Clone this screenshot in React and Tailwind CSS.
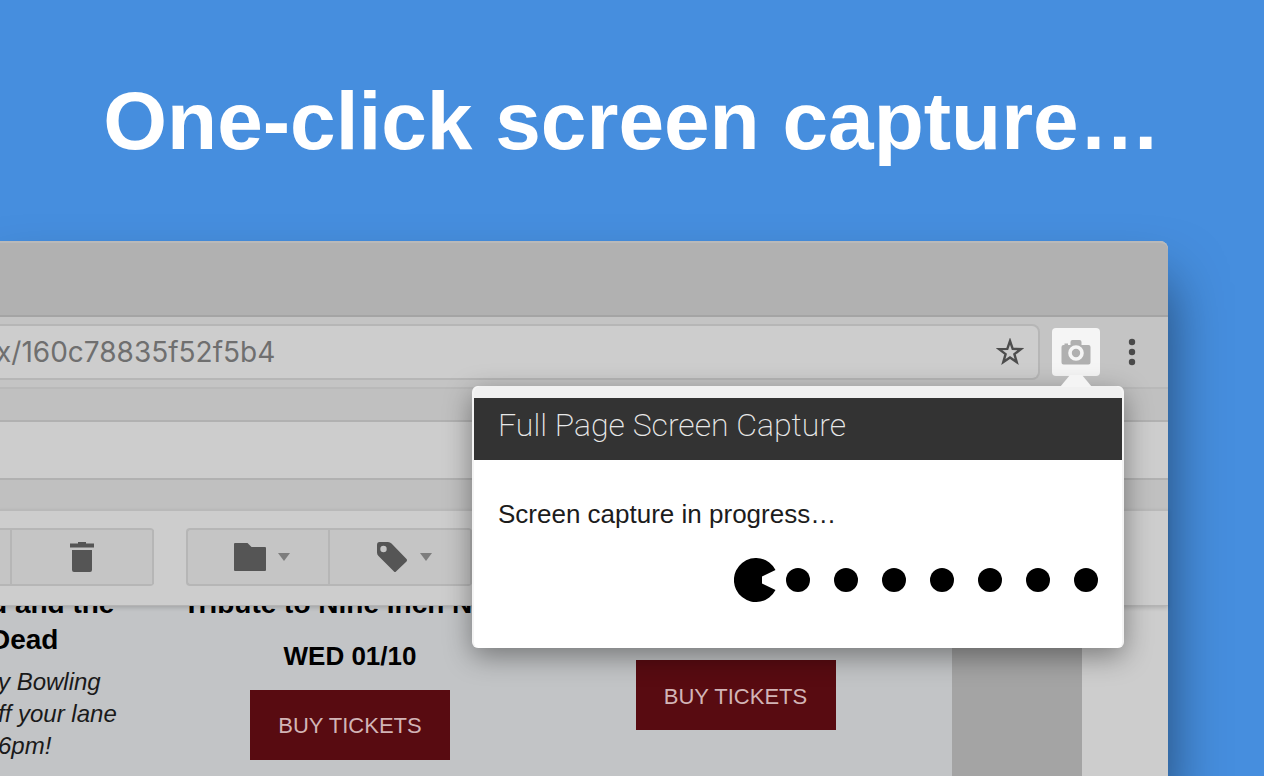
import React, { useState } from "react";

const DOTS = [64, 112, 160, 208, 256, 304, 352];

const StarIcon = () => (
  <svg viewBox="0 0 28 28" className="h-7 w-7" fill="none" stroke="#4d4d4d" strokeWidth="2.4">
    <path d="M14 3l2.7 7.9 8.2.2-6.5 5 2.3 8-6.7-4.7-6.7 4.7 2.3-8-6.5-5 8.2-.2z" />
  </svg>
);

const CameraIcon = () => (
  <svg viewBox="0 0 30 28" className="h-7 w-[30px]">
    <path
      d="M3.500 7V5.500h3.500V7h2.500V4a2 2 0 0 1 2-2h7a2 2 0 0 1 2 2v3H27.500a2 2 0 0 1 2 2v15.500a2 2 0 0 1-2 2h-25a2 2 0 0 1-2-2V9a2 2 0 0 1 2-2z"
      fill="#b0b0b0"
    />
    <circle cx="15" cy="15" r="6" fill="#b0b0b0" stroke="#f5f5f5" strokeWidth="3.6" />
  </svg>
);

const MoreIcon = () => (
  <svg viewBox="0 0 8 28" className="h-7 w-2" fill="#4a4a4a">
    <circle cx="4" cy="4" r="3.200" />
    <circle cx="4" cy="14" r="3.200" />
    <circle cx="4" cy="24" r="3.200" />
  </svg>
);

const TrashIcon = () => (
  <svg viewBox="0 0 24 30" className="h-[30px] w-6" fill="#555555">
    <path d="M8 0h8v1.500h8v4H0v-4h8zM2 8h20v20a2 2 0 0 1-2 2H4a2 2 0 0 1-2-2z" />
  </svg>
);

const FolderIcon = () => (
  <svg viewBox="0 0 32 28" className="h-7 w-8" fill="#555555">
    <path d="M1 0h12.500l4 4H31a1 1 0 0 1 1 1v22a1 1 0 0 1-1 1H1a1 1 0 0 1-1-1V1a1 1 0 0 1 1-1z" />
  </svg>
);

const TagIcon = () => (
  <svg viewBox="0 0 32 30" className="h-[30px] w-8" fill="#555555" fillRule="evenodd">
    <path d="M3.500 0H12q2 0 3.500 1.500L30.500 17q1 1.200 0 2.400L20 29.500q-1 1-2 0L2.500 14Q1 12.500 1 10.500V3Q1 0 3.500 0zM7.500 3.800a3.200 3.200 0 1 0 .01 6.400A3.200 3.200 0 0 0 7.500 3.800z" />
  </svg>
);

const Caret = () => (
  <svg viewBox="0 0 12 8" className="-mr-2 h-2 w-3" fill="#7d7d7d">
    <path d="M0 0h12L6 8z" />
  </svg>
);

const MailButton = ({ label, children }) => (
  <button
    aria-label={label}
    className="flex w-[142px] items-center justify-center gap-3 border-r-2 border-[#b6b6b6]"
  >
    {children}
  </button>
);

const TicketButton = () => (
  <button className="h-[70px] w-[200px] bg-[#580b11] pt-0.5 text-[22px] text-[#d2b4b6]">
    BUY TICKETS
  </button>
);

const CapturePopup = () => (
  <div
    role="dialog"
    aria-label="Full Page Screen Capture"
    className="absolute top-[145px] right-11 z-20 w-[652px] rounded-md border-x-2 border-[#f4f4f4] bg-white pb-[46px] shadow-[0_8px_28px_rgba(0,0,0,0.4)]"
  >
    <svg viewBox="0 0 32 12" className="absolute -top-[11px] right-[30px] h-3 w-8" fill="#f4f4f4">
      <path d="M0 12L10 0h12l10 12z" />
    </svg>
    <div className="h-3 rounded-t-md bg-[#f0f0f0]" />
    <h2 className="h-[62px] bg-[#333333] px-6 font-['Roboto'] text-[32px] leading-[54px] font-extralight whitespace-nowrap text-[#e8e8e8]">
      Full Page Screen Capture
    </h2>
    <div className="px-6 pt-9">
      <p className="text-[26px] leading-9 text-[#1c1c1c]">Screen capture in progress…</p>
      <svg
        viewBox="0 0 364 44"
        role="img"
        aria-label="Capture progress"
        className="mt-[26px] ml-auto h-11 w-[364px]"
      >
        <path d="M41.500 12A22 22 0 1 0 41.500 32L28 25.500V18.500z" />
        {DOTS.map((x) => (
          <circle key={x} cx={x} cy="22" r="12" />
        ))}
      </svg>
    </div>
  </div>
);

const App = () => {
  const [url, setUrl] = useState("x/160c78835f52f5b4");

  return (
    <div className="flex h-screen flex-col overflow-hidden bg-[#468ede] font-['Liberation_Sans',sans-serif]">
      <h1 className="pt-[73px] pb-[72px] text-center text-[82px] leading-[96px] font-bold whitespace-nowrap text-white">
        One-click screen capture…
      </h1>

      <div className="relative mr-24 flex min-h-0 flex-1 flex-col rounded-tr-lg bg-[#cdcdcd] shadow-[0_40px_56px_rgba(0,0,0,0.5)]">
        {/* tab strip */}
        <div className="h-[76px] shrink-0 rounded-tr-lg border-t-2 border-b-2 border-t-[#b9b9b9] border-b-[#a4a4a4] bg-[#b1b1b1]" />

        {/* address bar */}
        <div className="flex h-[72px] shrink-0 items-center border-b-2 border-[#b9b9b9] bg-[#c4c4c4] pr-5">
          <div className="flex h-14 flex-1 items-center rounded-r-lg border-2 border-l-0 border-[#b6b6b6] bg-[#cdcdcd] pr-3.5">
            <input
              aria-label="Address"
              value={url}
              onChange={(e) => setUrl(e.target.value)}
              className="-ml-1 min-w-0 flex-1 bg-transparent font-['Inter'] text-[28px] text-[#6f6f6f] outline-none"
            />
            <button aria-label="Bookmark">
              <StarIcon />
            </button>
          </div>
          <button
            aria-label="Capture"
            className="ml-3 flex h-12 w-12 items-center justify-center rounded bg-[#f5f5f5]"
          >
            <CameraIcon />
          </button>
          <button aria-label="Menu" className="ml-4 flex w-8 justify-center">
            <MoreIcon />
          </button>
        </div>

        <div className="h-[31px] shrink-0 bg-[#c0c0c0]" />
        <div className="h-[60px] shrink-0 border-y-2 border-[#b1b1b1] bg-[#cdcdcd]" />
        <div className="h-[29px] shrink-0 bg-[#c0c0c0]" />

        {/* mail toolbar */}
        <div className="relative z-10 flex h-[97px] shrink-0 gap-8 border-t-2 border-b border-t-[#b9b9b9] border-b-[#b4b4b4] bg-[#cdcdcd] pt-[17px] shadow-[0_2px_4px_rgba(0,0,0,0.15)]">
          <div className="flex h-[58px] rounded-r border-y-2 border-[#b6b6b6] bg-[#c5c5c5]">
            <div className="w-3 border-r-2 border-[#b6b6b6]" />
            <MailButton label="Delete">
              <TrashIcon />
            </MailButton>
          </div>
          <div className="flex h-[58px] rounded border-y-2 border-l-2 border-[#b6b6b6] bg-[#c5c5c5]">
            <MailButton label="Move to">
              <FolderIcon />
              <Caret />
            </MailButton>
            <MailButton label="Labels">
              <TagIcon />
              <Caret />
            </MailButton>
          </div>
        </div>

        {/* message */}
        <div className="flex min-h-0 flex-1 overflow-hidden text-black">
          <div className="flex flex-1 bg-[#c2c4c6] pr-6">
            <div className="-mt-5 w-[157px] whitespace-nowrap">
              <h3 className="-ml-2.5 text-[28px] leading-9 font-bold">
                <span className="block">d and the</span>
                <span className="block">Dead</span>
              </h3>
              <p className="-ml-0.5 mt-2 text-[24px] leading-8 text-[#1a1a1a] italic">
                <span className="block">y Bowling</span>
                <span className="block">ff your lane</span>
                <span className="block">6pm!</span>
              </p>
            </div>
            <div className="-mt-5 flex w-[386px] flex-col items-center gap-4 text-[26px] leading-9 font-bold">
              <h3 className="self-start pl-[26px] text-[28px] leading-9 whitespace-nowrap">
                Tribute to Nine Inch N
              </h3>
              <p>WED 01/10</p>
              <div className="font-normal">
                <TicketButton />
              </div>
            </div>
            <div className="flex flex-1 items-start justify-center pt-[54px]">
              <TicketButton />
            </div>
          </div>
          <div className="w-[130px] bg-[#a4a4a4]" />
          <div className="w-[86px] bg-[#cdcdcd]" />
        </div>

        <CapturePopup />
      </div>
    </div>
  );
};

export default App;
